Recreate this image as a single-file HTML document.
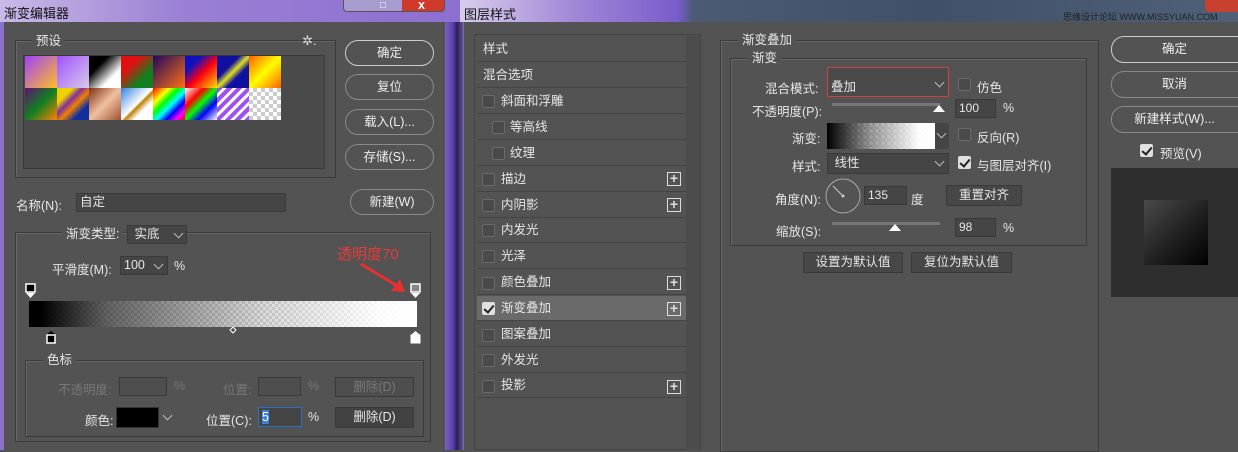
<!DOCTYPE html>
<html><head><meta charset="utf-8"><style>
*{box-sizing:border-box;margin:0;padding:0}
body{width:1238px;height:450px;overflow:hidden;background:#535353;position:relative;font-family:"Liberation Sans","Noto Sans CJK SC",sans-serif;font-size:12.5px;color:#e6e6e6}
.a{position:absolute;white-space:nowrap}
.box{position:absolute;border:1px solid #3c3c3c;box-shadow:1px 1px 0 #666 inset}
.lbl{position:absolute;background:#535353;padding:0 4px;line-height:14px}
.pill{position:absolute;border:1px solid #8a8a8a;border-radius:13px;text-align:center;color:#eee}
.in{position:absolute;background:#454545;border:1px solid #3a3a3a;padding-left:3px}
.btn{position:absolute;background:#474747;border:1px solid #3a3a3a;text-align:center}
.cb{position:absolute;width:13px;height:13px;background:#4a4a4a;border:1px solid #6a6a6a;border-radius:2px}
.cb.on{background:#e0e0e0;border-color:#ddd}
.cb.on::after{content:"";position:absolute;left:3px;top:0px;width:4px;height:8px;border:solid #222;border-width:0 2px 2px 0;transform:rotate(40deg)}
.plus{position:absolute;width:14px;height:14px;border:1px solid #ddd;color:#ddd;font-size:14px;line-height:11px;text-align:center;font-weight:bold}
.chk{background-image:linear-gradient(45deg,#ccc 25%,transparent 25%,transparent 75%,#ccc 75%),linear-gradient(45deg,#ccc 25%,#fff 25%,#fff 75%,#ccc 75%);background-size:8px 8px;background-position:0 0,4px 4px}
.li{position:absolute;left:477px;width:209px;height:25px;border-bottom:1px solid #444;line-height:25px}
.v{position:absolute;width:7px;height:7px;border:solid #bbb;border-width:0 1px 1px 0;transform:rotate(45deg)}
</style></head><body>
<div class="a" style="left:0;top:0;width:460px;height:22px;background:linear-gradient(90deg,#c9b9e6,#9a7fd4 40%,#8d6fd0)"></div>
<div class="a" style="left:4px;top:3px;color:#111;font-size:13px">渐变编辑器</div>
<div class="a" style="left:343px;top:0;width:102px;height:12px;border:1px solid #555;border-top:0;border-radius:0 0 4px 4px;background:linear-gradient(90deg,#a89bd0 0 58%,#d03a2a 58%)"></div>
<div class="a" style="left:380px;top:0;color:#fff;font-size:10px">□</div>
<div class="a" style="left:418px;top:-2px;color:#fff;font-weight:bold">x</div>
<div class="a" style="left:0;top:22px;width:4px;height:428px;background:#8c72cc"></div>
<div class="a" style="left:445px;top:22px;width:20px;height:428px;background:linear-gradient(90deg,#7a60c0,#5a3fb0 40%,#2a2050 60%,#7a60c0)"></div>
<div class="box" style="left:15px;top:40px;width:321px;height:138px"></div>
<div class="lbl" style="left:32px;top:34px">预设</div>
<div class="a" style="left:302px;top:33px;color:#ddd;font-size:13px">✲.</div>
<div class="a" style="left:23px;top:55px;width:302px;height:114px;background:#4a4a4a;border:1px solid #3a3a3a"></div>
<div class="a" style="left:25px;top:56px;display:grid;grid-template-columns:repeat(8,32px);grid-auto-rows:32px">
<div style="background:linear-gradient(135deg,#a040ff,#ffc020)"></div>
<div class="chk" style="background:linear-gradient(135deg,#a050ff,rgba(200,160,255,.3)),#ddd"></div>
<div style="background:linear-gradient(135deg,#000 30%,#fff 70%)"></div>
<div style="background:linear-gradient(135deg,#e01010 30%,#108020 70%)"></div>
<div style="background:linear-gradient(135deg,#200860,#ff7010)"></div>
<div style="background:linear-gradient(135deg,#1010c0 25%,#ff0010 55%,#ffe000)"></div>
<div style="background:linear-gradient(135deg,#1010a0 35%,#e0e020 50%,#1010a0 65%)"></div>
<div style="background:linear-gradient(135deg,#ff6000,#ffff00 50%,#ff6000)"></div>
<div style="background:linear-gradient(135deg,#601070,#108020 50%,#ff8000)"></div>
<div style="background:linear-gradient(135deg,#f0d000 25%,#8030a0 40%,#f08000 55%,#1030a0 75%)"></div>
<div style="background:linear-gradient(135deg,#803010,#f0c0a0 50%,#a05030)"></div>
<div style="background:linear-gradient(135deg,#3080e0,#fff 50%,#c08000 55%,#fff 70%)"></div>
<div style="background:linear-gradient(135deg,#f00,#ff0 25%,#0f0 40%,#0ff 55%,#00f 70%,#f0f 85%,#f00)"></div>
<div style="background:linear-gradient(135deg,#fff,#f00 30%,#0f0 50%,#00f 70%,#fff)"></div>
<div style="background:repeating-linear-gradient(135deg,#a050f0 0 4px,#fff 4px 7px)"></div>
<div class="chk"></div>
</div>
<div class="pill" style="left:345px;top:40px;width:89px;height:26px;line-height:24px;border-color:#ccc">确定</div>
<div class="pill" style="left:345px;top:74px;width:89px;height:26px;line-height:24px">复位</div>
<div class="pill" style="left:345px;top:109px;width:89px;height:26px;line-height:24px">载入(L)...</div>
<div class="pill" style="left:345px;top:144px;width:89px;height:26px;line-height:24px">存储(S)...</div>
<div class="pill" style="left:350px;top:189px;width:84px;height:26px;line-height:24px">新建(W)</div>
<div class="a" style="left:16px;top:195px">名称(N):</div>
<div class="in" style="left:76px;top:193px;width:210px;height:19px;line-height:17px">自定</div>
<div class="box" style="left:15px;top:232px;width:416px;height:210px"></div>
<div class="lbl" style="left:62px;top:227px">渐变类型:</div>
<div class="in" style="left:127px;top:225px;width:60px;height:19px;line-height:17px">&nbsp;实底</div><div class="v" style="left:175px;top:230px"></div>
<div class="a" style="left:52px;top:259px">平滑度(M):</div>
<div class="in" style="left:120px;top:256px;width:48px;height:19px;line-height:17px">100</div><div class="v" style="left:155px;top:261px"></div>
<div class="a" style="left:174px;top:259px">%</div>
<div class="a" style="left:337px;top:243px;color:#e83a3a;font-size:15px">透明度70</div>
<svg class="a" style="left:355px;top:260px" width="60" height="40"><line x1="6" y1="4" x2="44" y2="27" stroke="#e83030" stroke-width="3"/><polygon points="50,32 36,31 45,19" fill="#e83030"/></svg>
<svg class="a" style="left:24px;top:283px" width="400" height="65">
<rect x="2" y="1" width="9" height="8" fill="#000" stroke="#fff" stroke-width="1.5"/><polygon points="2,10 11,10 6.5,15" fill="#fff"/>
<rect x="387" y="1" width="9" height="8" fill="#888" stroke="#fff" stroke-width="1.5"/><polygon points="387,10 396,10 391.5,15" fill="#fff"/>
<polygon points="209,44 212,47 209,50 206,47" fill="none" stroke="#fff"/>
<polygon points="27,48 22,52 32,52" fill="#000"/><rect x="23" y="52" width="8" height="8" fill="#000" stroke="#fff" stroke-width="1.5"/>
<polygon points="391.5,48 387,52 396,52" fill="#fff"/><rect x="387" y="52" width="9" height="8" fill="#fff" stroke="#fff"/>
</svg>
<div class="a chk" style="left:29px;top:301px;width:388px;height:26px;background-size:6px 6px;background-position:0 0,3px 3px"></div>
<div class="a" style="left:29px;top:301px;width:388px;height:26px;background:linear-gradient(90deg,#000 3%,rgba(60,60,60,.8) 20%,rgba(180,180,180,.5) 60%,rgba(255,255,255,.85) 90%,#fff)"></div>
<div class="box" style="left:25px;top:360px;width:399px;height:77px"></div>
<div class="lbl" style="left:43px;top:353px">色标</div>
<div class="a" style="left:58px;top:379px;color:#777">不透明度:</div>
<div class="in" style="left:119px;top:377px;width:48px;height:19px;background:#4e4e4e"></div>
<div class="a" style="left:174px;top:379px;color:#777">%</div>
<div class="a" style="left:223px;top:379px;color:#777">位置:</div>
<div class="in" style="left:258px;top:377px;width:43px;height:19px;background:#4e4e4e"></div>
<div class="a" style="left:308px;top:379px;color:#777">%</div>
<div class="btn" style="left:335px;top:377px;width:79px;height:20px;line-height:18px;color:#777;background:#4e4e4e">删除(D)</div>
<div class="a" style="left:85px;top:410px">颜色:</div>
<div class="a" style="left:116px;top:407px;width:43px;height:21px;background:#000;border:1px solid #333"></div>
<div class="v" style="left:164px;top:412px"></div>
<div class="a" style="left:206px;top:410px">位置(C):</div>
<div class="in" style="left:258px;top:407px;width:44px;height:20px;border:1px solid #2f6fc0;line-height:18px"><span style="background:#3a7fd8;color:#fff">5</span></div>
<div class="a" style="left:308px;top:410px">%</div>
<div class="btn" style="left:335px;top:407px;width:79px;height:21px;line-height:19px;background:#424242">删除(D)</div>

<div class="a" style="left:460px;top:0;width:778px;height:22px;background:linear-gradient(90deg,#d8cdec,#9f86d6 15%,#7a5ccc 28%,#4c5a74 30%,#405068 60%,#506078 100%)"></div>
<div class="a" style="left:464px;top:4px;color:#111;font-size:13px">图层样式</div>
<div class="a" style="left:1063px;top:10px;color:#222;font-size:9px">思缘设计论坛 WWW.MISSYUAN.COM</div>
<div class="a" style="left:1205px;top:0;width:33px;height:12px;background:#c84030;border-radius:0 0 0 4px"></div>
<div class="a" style="left:463px;top:22px;width:775px;height:428px;background:#535353;border-left:1px solid #777"></div>
<div class="a" style="left:474px;top:34px;width:227px;height:416px;border:1px solid #444;background:#535353"></div>
<div class="a" style="left:686px;top:36px;width:14px;height:414px;background:#4c4c4c"></div>
<div class="li" style="top:37px"><span style="margin-left:6px">样式</span></div>
<div class="li" style="top:63px"><span style="margin-left:6px">混合选项</span></div>
<div class="li" style="top:89px"><span style="margin-left:24px">斜面和浮雕</span></div><div class="cb" style="left:482px;top:95px"></div>
<div class="li" style="top:115px"><span style="margin-left:33px">等高线</span></div><div class="cb" style="left:492px;top:121px"></div>
<div class="li" style="top:141px"><span style="margin-left:33px">纹理</span></div><div class="cb" style="left:492px;top:147px"></div>
<div class="li" style="top:167px"><span style="margin-left:24px">描边</span></div><div class="cb" style="left:482px;top:173px"></div><div class="plus" style="left:667px;top:172px">+</div>
<div class="li" style="top:193px"><span style="margin-left:24px">内阴影</span></div><div class="cb" style="left:482px;top:199px"></div><div class="plus" style="left:667px;top:198px">+</div>
<div class="li" style="top:218px"><span style="margin-left:24px">内发光</span></div><div class="cb" style="left:482px;top:224px"></div>
<div class="li" style="top:244px"><span style="margin-left:24px">光泽</span></div><div class="cb" style="left:482px;top:250px"></div>
<div class="li" style="top:270px"><span style="margin-left:24px">颜色叠加</span></div><div class="cb" style="left:482px;top:277px"></div><div class="plus" style="left:667px;top:276px">+</div>
<div class="li" style="top:296px;background:#6a6a6a"><span style="margin-left:24px">渐变叠加</span></div><div class="cb on" style="left:482px;top:302px"></div><div class="plus" style="left:667px;top:302px">+</div>
<div class="li" style="top:322px"><span style="margin-left:24px">图案叠加</span></div><div class="cb" style="left:482px;top:329px"></div>
<div class="li" style="top:348px"><span style="margin-left:24px">外发光</span></div><div class="cb" style="left:482px;top:354px"></div>
<div class="li" style="top:373px"><span style="margin-left:24px">投影</span></div><div class="cb" style="left:482px;top:380px"></div><div class="plus" style="left:667px;top:380px">+</div>
<div class="box" style="left:720px;top:40px;width:379px;height:412px"></div>
<div class="lbl" style="left:738px;top:33px">渐变叠加</div>
<div class="box" style="left:730px;top:58px;width:357px;height:188px"></div>
<div class="lbl" style="left:748px;top:51px">渐变</div>
<div class="a" style="left:765px;top:78px">混合模式:</div>
<div class="in" style="left:827px;top:67px;width:122px;height:30px;border:1px solid #d04040;background:#4a4a4a;padding-top:8px">叠加</div><div class="v" style="left:936px;top:79px"></div>
<div class="cb" style="left:958px;top:78px"></div><div class="a" style="left:977px;top:77px">仿色</div>
<div class="a" style="left:752px;top:101px">不透明度(P):</div>
<div class="a" style="left:832px;top:103px;width:108px;height:3px;background:#777"></div>
<div class="a" style="left:933px;top:105px;width:0;height:0;border:6px solid transparent;border-bottom:7px solid #fff;border-top:0"></div>
<div class="in" style="left:955px;top:99px;width:41px;height:19px;line-height:17px;font-size:12px">100</div><div class="a" style="left:1003px;top:101px">%</div>
<div class="a" style="left:792px;top:128px">渐变:</div>
<div class="a chk" style="left:827px;top:123px;width:108px;height:26px;background-size:6px 6px"></div>
<div class="a" style="left:827px;top:123px;width:108px;height:26px;background:linear-gradient(90deg,#000,rgba(90,90,90,.6) 40%,rgba(255,255,255,.9) 85%,#fff)"></div>
<div class="a" style="left:935px;top:123px;width:14px;height:26px;background:#454545"></div><div class="v" style="left:938px;top:130px"></div>
<div class="cb" style="left:958px;top:128px"></div><div class="a" style="left:977px;top:127px">反向(R)</div>
<div class="a" style="left:792px;top:156px">样式:</div>
<div class="in" style="left:827px;top:153px;width:122px;height:21px;line-height:19px">&nbsp;线性</div><div class="v" style="left:936px;top:158px"></div>
<div class="cb on" style="left:958px;top:156px"></div><div class="a" style="left:977px;top:155px">与图层对齐(I)</div>
<div class="a" style="left:775px;top:189px">角度(N):</div>
<svg class="a" style="left:824px;top:177px" width="38" height="38"><circle cx="19" cy="19" r="17" fill="none" stroke="#aaa"/><line x1="19" y1="19" x2="9" y2="9" stroke="#ccc"/><circle cx="19" cy="19" r="1.5" fill="#ccc"/></svg>
<div class="in" style="left:864px;top:186px;width:43px;height:19px;line-height:17px;font-size:12px">135</div><div class="a" style="left:911px;top:189px">度</div>
<div class="btn" style="left:946px;top:185px;width:76px;height:21px;line-height:19px">重置对齐</div>
<div class="a" style="left:776px;top:221px">缩放(S):</div>
<div class="a" style="left:832px;top:222px;width:108px;height:3px;background:#777"></div>
<div class="a" style="left:889px;top:224px;width:0;height:0;border:6px solid transparent;border-bottom:7px solid #fff;border-top:0"></div>
<div class="in" style="left:955px;top:218px;width:41px;height:19px;line-height:17px;font-size:12px">98</div><div class="a" style="left:1003px;top:221px">%</div>
<div class="btn" style="left:803px;top:252px;width:100px;height:21px;line-height:19px">设置为默认值</div>
<div class="btn" style="left:911px;top:252px;width:101px;height:21px;line-height:19px">复位为默认值</div>
<div class="pill" style="left:1111px;top:36px;width:140px;height:27px;line-height:25px;border-color:#ccc;padding-right:13px">确定</div>
<div class="pill" style="left:1111px;top:71px;width:140px;height:27px;line-height:25px;padding-right:13px">取消</div>
<div class="pill" style="left:1111px;top:106px;width:140px;height:27px;line-height:25px;padding-right:13px">新建样式(W)...</div>
<div class="cb on" style="left:1140px;top:144px"></div><div class="a" style="left:1160px;top:143px">预览(V)</div>
<div class="a" style="left:1111px;top:168px;width:127px;height:129px;background:#2e2e2e"></div>
<div class="a" style="left:1144px;top:200px;width:64px;height:65px;background:linear-gradient(135deg,#4a4a4a,#1c1c1c 60%,#000)"></div>
</body></html>
